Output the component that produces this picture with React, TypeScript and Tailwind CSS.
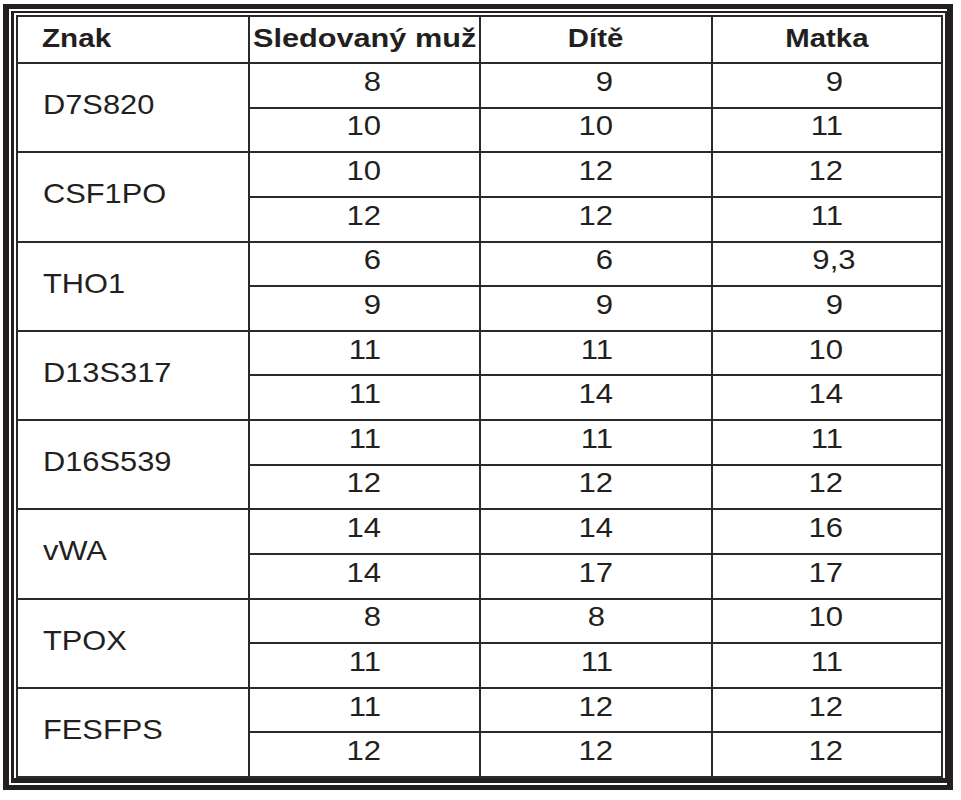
import React from "react";

type Cell = { v: string; pr?: string };
type Group = { label: string; a: Cell[]; b: Cell[] };

const c = (v: string, pr?: string): Cell => ({ v, pr });

const groups: Group[] = [
  { label: "D7S820", a: [c("8"), c("9"), c("9")], b: [c("10"), c("10"), c("11")] },
  { label: "CSF1PO", a: [c("10"), c("12"), c("12")], b: [c("12"), c("12"), c("11")] },
  { label: "THO1", a: [c("6"), c("6"), c("9,3", "pr-[85px]")], b: [c("9"), c("9"), c("9")] },
  { label: "D13S317", a: [c("11"), c("11"), c("10")], b: [c("11"), c("14"), c("14")] },
  { label: "D16S539", a: [c("11"), c("11"), c("11")], b: [c("12"), c("12"), c("12")] },
  { label: "vWA", a: [c("14"), c("14"), c("16")], b: [c("14"), c("17"), c("17")] },
  { label: "TPOX", a: [c("8"), c("8", "pr-[106px]"), c("10")], b: [c("11"), c("11"), c("11")] },
  { label: "FESFPS", a: [c("11"), c("12"), c("12")], b: [c("12"), c("12"), c("12")] },
];

const font = { fontFamily: '"Liberation Sans", Arial, Helvetica, sans-serif' };

function NumCell({ cell, first }: { cell: Cell; first?: boolean }) {
  return (
    <div
      className={`flex items-center justify-end pb-[6px] ${cell.pr ?? "pr-[98px]"} ${
        first ? "border-l-2" : "border-l-2"
      } border-[#2a2a2a]`}
    >
      <span className="block origin-right scale-x-[1.15] text-[27px] leading-none text-[#231f20]">
        {cell.v}
      </span>
    </div>
  );
}

function SubRow({ cells, top }: { cells: Cell[]; top?: boolean }) {
  return (
    <div
      className={`grid flex-1 grid-cols-[231px_232px_230px] ${
        top ? "border-t-2 border-[#2a2a2a]" : ""
      }`}
    >
      {cells.map((cell, i) => (
        <NumCell key={i} cell={cell} first={i === 0} />
      ))}
    </div>
  );
}

export default function App() {
  return (
    <div className="h-[800px] w-[961px] bg-white pl-[3px] pt-[4px]" style={font}>
      <div className="h-[786px] w-[950px] border-b-[5px] border-l-[6px] border-r-[6px] border-t-[5px] border-[#231f20] bg-white pb-[2px] pl-[2px] pr-[0px] pt-[2px]">
        <div className="flex h-full w-[936px] flex-col border-b-[5px] border-l-[3px] border-r-[2px] border-t-[2px] border-[#231f20] pb-0 pl-[2px] pr-[1px] pt-[2px]">
          <div className="flex w-[927px] flex-col border-2 border-[#2a2a2a]">
            {/* Header */}
            <div className="grid h-[45px] grid-cols-[230px_231px_232px_230px] text-[26px] font-bold leading-none text-[#231f20]">
              <div className="flex items-center pb-[3px] pl-[24px]">
                <span className="block origin-left scale-x-[1.14]">Znak</span>
              </div>
              <div className="flex items-center justify-center border-l-2 border-[#2a2a2a] pb-[3px]">
                <span className="block scale-x-[1.18] whitespace-nowrap">Sledovaný muž</span>
              </div>
              <div className="flex items-center justify-center border-l-2 border-[#2a2a2a] pb-[3px]">
                <span className="block scale-x-[1.13]">Dítě</span>
              </div>
              <div className="flex items-center justify-center border-l-2 border-[#2a2a2a] pb-[3px]">
                <span className="block scale-x-[1.13]">Matka</span>
              </div>
            </div>
            {/* Body */}
            {groups.map((g) => (
              <div key={g.label} className="flex h-[89.25px] border-t-2 border-[#2a2a2a]">
                <div className="flex w-[230px] items-center pb-[5px] pl-[25px]">
                  <span className="block origin-left scale-x-[1.1] text-[28px] leading-none text-[#231f20]">
                    {g.label}
                  </span>
                </div>
                <div className="flex flex-1 flex-col">
                  <SubRow cells={g.a} />
                  <SubRow cells={g.b} top />
                </div>
              </div>
            ))}
          </div>
        </div>
      </div>
    </div>
  );
}
